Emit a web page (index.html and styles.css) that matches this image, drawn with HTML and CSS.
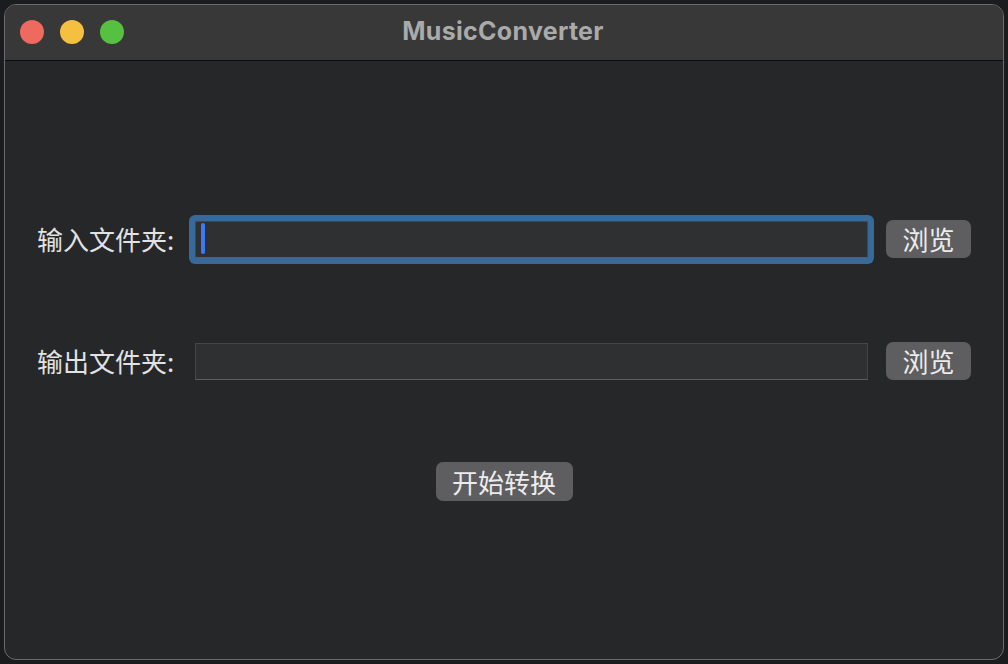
FILE: index.html
```html
<!DOCTYPE html>
<html lang="zh-CN">
<head>
<meta charset="utf-8">
<title>MusicConverter</title>
<link rel="stylesheet" href="styles.css">
</head>
<body>
<div class="window">
  <div class="titlebar">
    <div class="lights">
      <span class="light red"></span>
      <span class="light yellow"></span>
      <span class="light green"></span>
    </div>
    <div class="title">MusicConverter</div>
  </div>
  <div class="content">
    <div class="row row-first">
      <label class="label">输入文件夹:</label>
      <div class="field focused"><span class="caret"></span></div>
      <button class="btn">浏览</button>
    </div>
    <div class="row row-second">
      <label class="label">输出文件夹:</label>
      <div class="field"></div>
      <button class="btn">浏览</button>
    </div>
    <div class="actions">
      <button class="btn">开始转换</button>
    </div>
  </div>
</div>
</body>
</html>
```

FILE: styles.css
```css
html, body {
  margin: 0;
  padding: 0;
  width: 1008px;
  height: 664px;
  overflow: hidden;
  background: #1b1c1e;
}

body {
  padding: 4px;
  box-sizing: border-box;
  font-family: "Noto Sans CJK SC", "Noto Sans", sans-serif;
}

.window {
  width: 1000px;
  height: 656px;
  box-sizing: border-box;
  border: 1px solid #6b6b6d;
  border-radius: 12px;
  background: #262729;
  overflow: hidden;
  display: flex;
  flex-direction: column;
}

.titlebar {
  height: 55px;
  flex: none;
  background: #383838;
  border-bottom: 1px solid #0d0d0d;
  position: relative;
  display: flex;
  align-items: center;
  justify-content: center;
}

.lights {
  position: absolute;
  left: 15px;
  top: 15px;
  display: flex;
  gap: 16px;
}

.light {
  width: 24px;
  height: 24px;
  border-radius: 50%;
  display: block;
}
.red { background: #ee6a5e; }
.yellow { background: #f5bf3f; }
.green { background: #56c140; }

.title {
  font-family: Inter, "Liberation Sans", sans-serif;
  font-weight: 700;
  font-size: 25px;
  color: #aaaaaa;
  letter-spacing: 0.3px;
  margin-top: -4px;
  margin-left: -2px;
}

.content {
  flex: 1;
  padding: 0 32px;
  display: flex;
  flex-direction: column;
}

.row {
  display: flex;
  align-items: center;
  height: 48px;
}

.row-first { margin-top: 154px; }
.row-second { margin-top: 74px; }

.label {
  width: 158px;
  flex: none;
  font-size: 26px;
  font-weight: 400;
  color: #e2e2e2;
  line-height: 1;
  margin-top: -1px;
}

.field {
  flex: 1;
  height: 37px;
  box-sizing: border-box;
  background: #2f3032;
  border: 1px solid #454648;
  border-bottom-color: #5d5e60;
  position: relative;
}

.field.focused {
  box-shadow: 0 0 0 6px #38699b;
  border-radius: 2px;
  height: 37px;
}

.caret {
  position: absolute;
  left: 5px;
  top: 1px;
  width: 4px;
  height: 31px;
  border-radius: 2px;
  background: #3b7af4;
}

.btn {
  flex: none;
  margin-left: 18px;
  height: 38px;
  padding: 0 16px;
  border: none;
  border-radius: 7px;
  background: #5e5e60;
  color: #ececec;
  font-family: "Noto Sans CJK SC", sans-serif;
  font-size: 26px;
  font-weight: 400;
  line-height: 38px;
  display: flex;
  align-items: center;
  justify-content: center;
}

.row .btn { width: 85px; padding: 0; }

.actions {
  display: flex;
  justify-content: center;
  margin-top: 77px;
}

.actions .btn {
  margin-left: 0;
  height: 39px;
  width: 137px;
  padding: 0;
}
```
